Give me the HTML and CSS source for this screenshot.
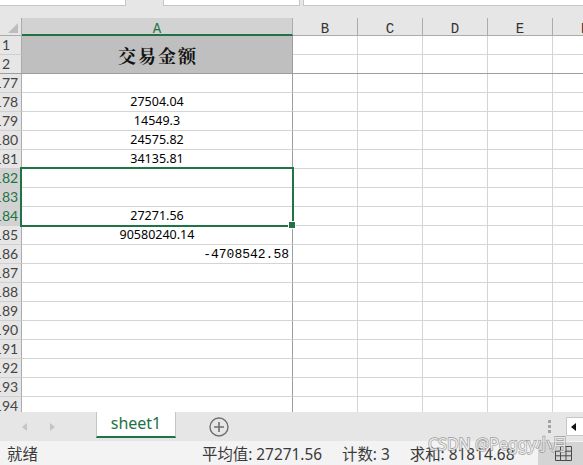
FILE: index.html
```html
<!DOCTYPE html>
<html lang="zh-CN">
<head>
<meta charset="utf-8">
<title>sheet1</title>
<link rel="stylesheet" href="styles.css">
</head>
<body>
<div class="app">
  <!-- formula bar, only its lower edge is in view -->
  <div class="formula-strip">
    <div class="fbox fbox-name"></div>
    <div class="fbox fbox-fn"></div>
    <div class="fbox fbox-input"></div>
  </div>

  <div class="sheet">
    <div class="corner"><i class="corner-tri"></i></div>
    <div class="colhead is-active">A</div>
    <div class="colhead">B</div>
    <div class="colhead">C</div>
    <div class="colhead">D</div>
    <div class="colhead">E</div>
    <div class="colhead">F</div>

    <!-- frozen rows 1-2 -->
    <div class="rowhead"><span>1</span></div>
    <div class="cell title">交易金额</div>
    <div class="blank blank-frozen"></div>
    <div class="rowhead rowhead-frozen"><span>2</span></div>

    <!-- scrolled area, columns B onward are empty -->
    <div class="blank blank-body"></div>

    <div class="rowhead"><span>177</span></div><div class="cell"></div>
    <div class="rowhead"><span>178</span></div><div class="cell">27504.04</div>
    <div class="rowhead"><span>179</span></div><div class="cell">14549.3</div>
    <div class="rowhead"><span>180</span></div><div class="cell">24575.82</div>
    <div class="rowhead"><span>181</span></div><div class="cell">34135.81</div>
    <div class="rowhead is-active"><span>182</span></div><div class="cell anchor"><div class="selection"></div></div>
    <div class="rowhead is-active"><span>183</span></div><div class="cell"></div>
    <div class="rowhead is-active"><span>184</span></div><div class="cell">27271.56</div>
    <div class="rowhead"><span>185</span></div><div class="cell">90580240.14</div>
    <div class="rowhead"><span>186</span></div><div class="cell cell-text">-4708542.58</div>
    <div class="rowhead"><span>187</span></div><div class="cell"></div>
    <div class="rowhead"><span>188</span></div><div class="cell"></div>
    <div class="rowhead"><span>189</span></div><div class="cell"></div>
    <div class="rowhead"><span>190</span></div><div class="cell"></div>
    <div class="rowhead"><span>191</span></div><div class="cell"></div>
    <div class="rowhead"><span>192</span></div><div class="cell"></div>
    <div class="rowhead"><span>193</span></div><div class="cell"></div>
    <div class="rowhead"><span>194</span></div><div class="cell"></div>
  </div>

  <div class="tabbar">
    <div class="tabnav">
      <svg class="nav-arrow" width="5" height="8" viewBox="0 0 5 8"><polygon points="5,0 5,8 0,4"/></svg>
      <svg class="nav-arrow" width="5" height="8" viewBox="0 0 5 8"><polygon points="0,0 0,8 5,4"/></svg>
    </div>
    <div class="tab">sheet1</div>
    <div class="tab-add">
      <svg width="20" height="20" viewBox="0 0 20 20">
        <circle cx="10" cy="10" r="9" fill="none" stroke="#6f6f6f" stroke-width="1.4"/>
        <path d="M10 5v10M5 10h10" stroke="#6f6f6f" stroke-width="1.6"/>
      </svg>
    </div>
    <div class="tab-split">
      <svg width="3" height="13" viewBox="0 0 3 13">
        <rect x="0" y="0" width="3" height="3"/>
        <rect x="0" y="5" width="3" height="3"/>
        <rect x="0" y="10" width="3" height="3"/>
      </svg>
    </div>
    <div class="hscroll">
      <svg width="5" height="8" viewBox="0 0 5 8"><polygon points="5,0 5,8 0,4"/></svg>
    </div>
  </div>

  <div class="statusbar">
    <div class="status-ready">就绪</div>
    <div class="stats">
      <span>平均值: 27271.56</span>
      <span>计数: 3</span>
      <span>求和: 81814.68</span>
    </div>
    <div class="viewbox">
      <svg width="17" height="15" viewBox="0 0 17 15">
        <path d="M5.5 0.5H16.5M0.5 5.2H16.5M0.5 9.8H16.5M0.5 14.5H16.5M0.5 5.2V14.5M5.5 0.5V14.5M11 0.5V14.5M16.5 0.5V14.5" fill="none" stroke="#4a4a4a" stroke-width="1"/>
      </svg>
    </div>
  </div>

  <div class="watermark">CSDN @Peggy小月</div>
</div>
</body>
</html>
```

FILE: styles.css
```css
* {
  box-sizing: border-box;
}

html,
body {
  margin: 0;
  padding: 0;
}

body {
  width: 583px;
  height: 465px;
  overflow: hidden;
  background: #e6e6e6;
  font-family: "Noto Sans", "Noto Sans CJK SC", sans-serif;
}

.app {
  position: relative;
  width: 583px;
  height: 465px;
  display: flex;
  flex-direction: column;
}

/* ---------- formula bar edge ---------- */
.formula-strip {
  height: 18px;
  flex: none;
  display: flex;
  align-items: flex-start;
  background: #e6e6e6;
}

.fbox {
  height: 6px;
  background: #fff;
  border: 1px solid #c6c6c6;
  border-top: 0;
}

.fbox-name {
  width: 126px;
  border-left: 0;
}

.fbox-fn {
  width: 137px;
  margin-left: 37px;
}

.fbox-input {
  flex: 1;
  margin-left: 3px;
  border-right: 0;
}

/* ---------- worksheet grid ---------- */
.sheet {
  height: 394px;
  flex: none;
  overflow: hidden;
  display: grid;
  grid-template-columns: 22px 271px repeat(5, 65px);
  grid-template-rows: 18px repeat(20, 19px);
  background: #fff;
}

.corner {
  background: #e6e6e6;
  border-right: 1px solid #ababab;
  border-bottom: 1px solid #ababab;
  display: flex;
  justify-content: flex-end;
  align-items: flex-end;
  padding: 0 3px 2px 0;
}

.corner-tri {
  display: block;
  width: 10px;
  height: 10px;
  background: #bdbdbd;
  clip-path: polygon(100% 0, 100% 100%, 0 100%);
}

.colhead {
  background: #e6e6e6;
  border-right: 1px solid #ababab;
  border-bottom: 1px solid #ababab;
  font-family: "Liberation Mono", monospace;
  font-size: 14px;
  line-height: 14px;
  padding-top: 4px;
  text-align: center;
  color: #333;
}

.colhead.is-active {
  background: #d2d2d2;
  color: #217346;
  border-bottom: 2px solid #217346;
}

.rowhead {
  background: #e6e6e6;
  border-right: 1px solid #ababab;
  border-bottom: 1px solid #d0d0d0;
  overflow: hidden;
  font-family: Lato, "Noto Sans", sans-serif;
  font-size: 14px;
  line-height: 18px;
  color: #444;
}

/* the header is wider than the visible strip; keep the label centred in it */
.rowhead span {
  display: block;
  width: 30px;
  margin-left: -9px;
  text-align: center;
}

.rowhead.rowhead-frozen {
  border-bottom-color: #9e9e9e;
}

.rowhead.is-active {
  background: #d2d2d2;
  color: #217346;
}

.cell {
  border-right: 1px solid #9e9e9e;
  border-bottom: 1px solid #d4d4d4;
  font-size: 12.5px;
  line-height: 18px;
  text-align: center;
  color: #000;
  white-space: nowrap;
}

.cell.title {
  grid-column: 2;
  grid-row: 2 / span 2;
  background: #bfbfbf;
  border-bottom-color: #9e9e9e;
  display: flex;
  align-items: center;
  justify-content: center;
  padding-left: 2px;
  font-family: "Noto Serif CJK SC", "Noto Sans CJK SC", sans-serif;
  font-weight: 700;
  font-size: 18px;
  letter-spacing: 2px;
  color: #111;
}

.cell.cell-text {
  text-align: right;
  padding-right: 3px;
  padding-top: 1px;
  font-family: "Liberation Mono", monospace;
  font-size: 13px;
  line-height: 17px;
}

.blank {
  grid-column: 3 / -1;
  background-color: #fff;
  background-image:
    repeating-linear-gradient(to right, transparent 0 64px, #d4d4d4 64px 65px),
    repeating-linear-gradient(to bottom, transparent 0 18px, #d4d4d4 18px 19px);
}

.blank-frozen {
  grid-row: 2 / span 2;
  border-bottom: 1px solid #9e9e9e;
}

.blank-body {
  grid-row: 4 / span 18;
}

/* active range A182:A184 */
.anchor {
  position: relative;
}

.selection {
  position: absolute;
  top: -2px;
  left: -2px;
  width: 274px;
  height: 60px;
  border: 2px solid #217346;
  z-index: 2;
}

.selection::after {
  content: "";
  position: absolute;
  right: -4px;
  bottom: -4px;
  width: 6px;
  height: 6px;
  background: #217346;
  border: 1px solid #fff;
}

/* ---------- sheet tabs ---------- */
.tabbar {
  height: 29px;
  flex: none;
  display: flex;
  align-items: flex-start;
  background: #e6e6e6;
}

.tabnav {
  width: 96px;
  height: 29px;
  display: flex;
  align-items: center;
  gap: 23px;
  padding-left: 22px;
}

.nav-arrow {
  display: block;
  fill: #c4c4c4;
}

.tab {
  width: 80px;
  height: 26px;
  background: #fff;
  border-left: 1px solid #c6c6c6;
  border-right: 1px solid #c6c6c6;
  border-bottom: 2px solid #217346;
  text-align: center;
  font-size: 16px;
  line-height: 22px;
  color: #217346;
}

.tab-add {
  height: 29px;
  margin-left: 33px;
  display: flex;
  align-items: center;
}

.tab-add svg {
  display: block;
}

.tab-split {
  margin-left: auto;
  padding-top: 8px;
}

.tab-split svg {
  display: block;
  fill: #a3a3a3;
}

.hscroll {
  width: 17px;
  height: 19px;
  margin-top: 5px;
  margin-left: 15px;
  background: #fff;
  border: 1px solid #c6c6c6;
  border-right: 0;
  display: flex;
  align-items: center;
  padding-left: 4px;
}

.hscroll svg {
  display: block;
  fill: #111;
}

/* ---------- status bar ---------- */
.statusbar {
  flex: 1;
  display: flex;
  align-items: center;
  background: #f3f3f3;
  font-size: 15.4px;
  color: #3a3a3a;
}

.status-ready {
  width: 202px;
  padding-left: 7px;
}

.stats {
  display: flex;
  gap: 20px;
}

.viewbox {
  margin-left: auto;
  width: 45px;
  align-self: stretch;
  margin-top: 1px;
  background: #d4d4d4;
  display: flex;
  align-items: center;
  padding-left: 17px;
}

.viewbox svg {
  display: block;
}

/* ---------- author watermark over the status bar ---------- */
.watermark {
  position: absolute;
  left: 428px;
  top: 434px;
  font-size: 16px;
  line-height: 20px;
  color: rgba(250, 250, 250, 0.85);
  -webkit-text-stroke: 1.4px rgba(130, 130, 130, 0.75);
  paint-order: stroke fill;
  pointer-events: none;
}
```
